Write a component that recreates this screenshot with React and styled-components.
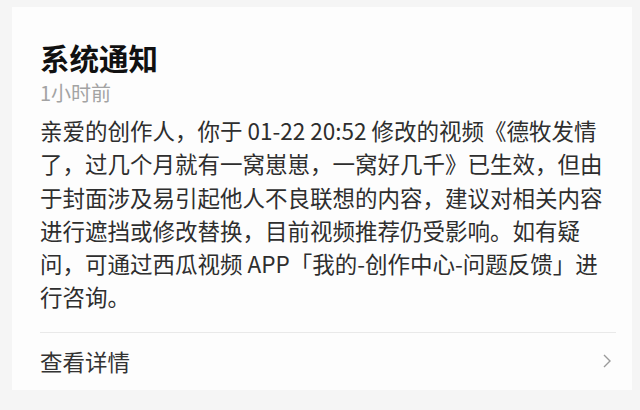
import React from "react";
import styled, { createGlobalStyle } from "styled-components";

const Global = createGlobalStyle`
  html, body { margin: 0; padding: 0; background: #f5f5f5; }
  body { font-family: "Noto Sans CJK SC", "Noto Sans", sans-serif; }
`;

const Page = styled.div`
  width: 640px;
  height: 410px;
  box-sizing: border-box;
  padding: 7px 8px 20px 12px;
  background: #f5f5f5;
`;

const Card = styled.div`
  background: #fdfdfd;
  height: 100%;
  box-sizing: border-box;
  padding: 30px 26px 0 28px;
  display: flex;
  flex-direction: column;
`;

const Title = styled.h1`
  margin: 0;
  font-size: 29.5px;
  font-weight: 700;
  line-height: 40px;
  color: #111;
`;

const Time = styled.div`
  font-size: 20px;
  line-height: 28px;
  color: #a3a3a3;
  margin-top: 2px;
`;

const Body = styled.p`
  margin: 7px 0 0;
  width: 568px;
  font-size: 22.5px;
  line-height: 33.3px;
  color: #2e2e2e;
`;

const Divider = styled.hr`
  border: none;
  border-top: 1px solid #e9e9e9;
  margin: 18px 0 0;
  width: 576px;
`;

const Row = styled.div`
  display: flex;
  align-items: center;
  justify-content: space-between;
  height: 56px;
  width: 572px;
  font-size: 22.5px;
  color: #333;
`;

const Chevron = () => (
  <svg width="10" height="16" viewBox="0 0 10 16">
    <path d="M2 2 L8 8 L2 14" fill="none" stroke="#9a9a9a" strokeWidth="1.4" />
  </svg>
);

export default function App() {
  return (
    <Page>
      <Global />
      <Card>
        <Title>系统通知</Title>
        <Time>1小时前</Time>
        <Body>
          亲爱的创作人，你于 01-22 20:52 修改的视频《德牧发情了，过几个月就有一窝崽崽，一窝好几千》已生效，但由于封面涉及易引起他人不良联想的内容，建议对相关内容进行遮挡或修改替换，目前视频推荐仍受影响。如有疑问，可通过西瓜视频 APP「我的-创作中心-问题反馈」进行咨询。
        </Body>
        <Divider />
        <Row>
          <span>查看详情</span>
          <Chevron />
        </Row>
      </Card>
    </Page>
  );
}
